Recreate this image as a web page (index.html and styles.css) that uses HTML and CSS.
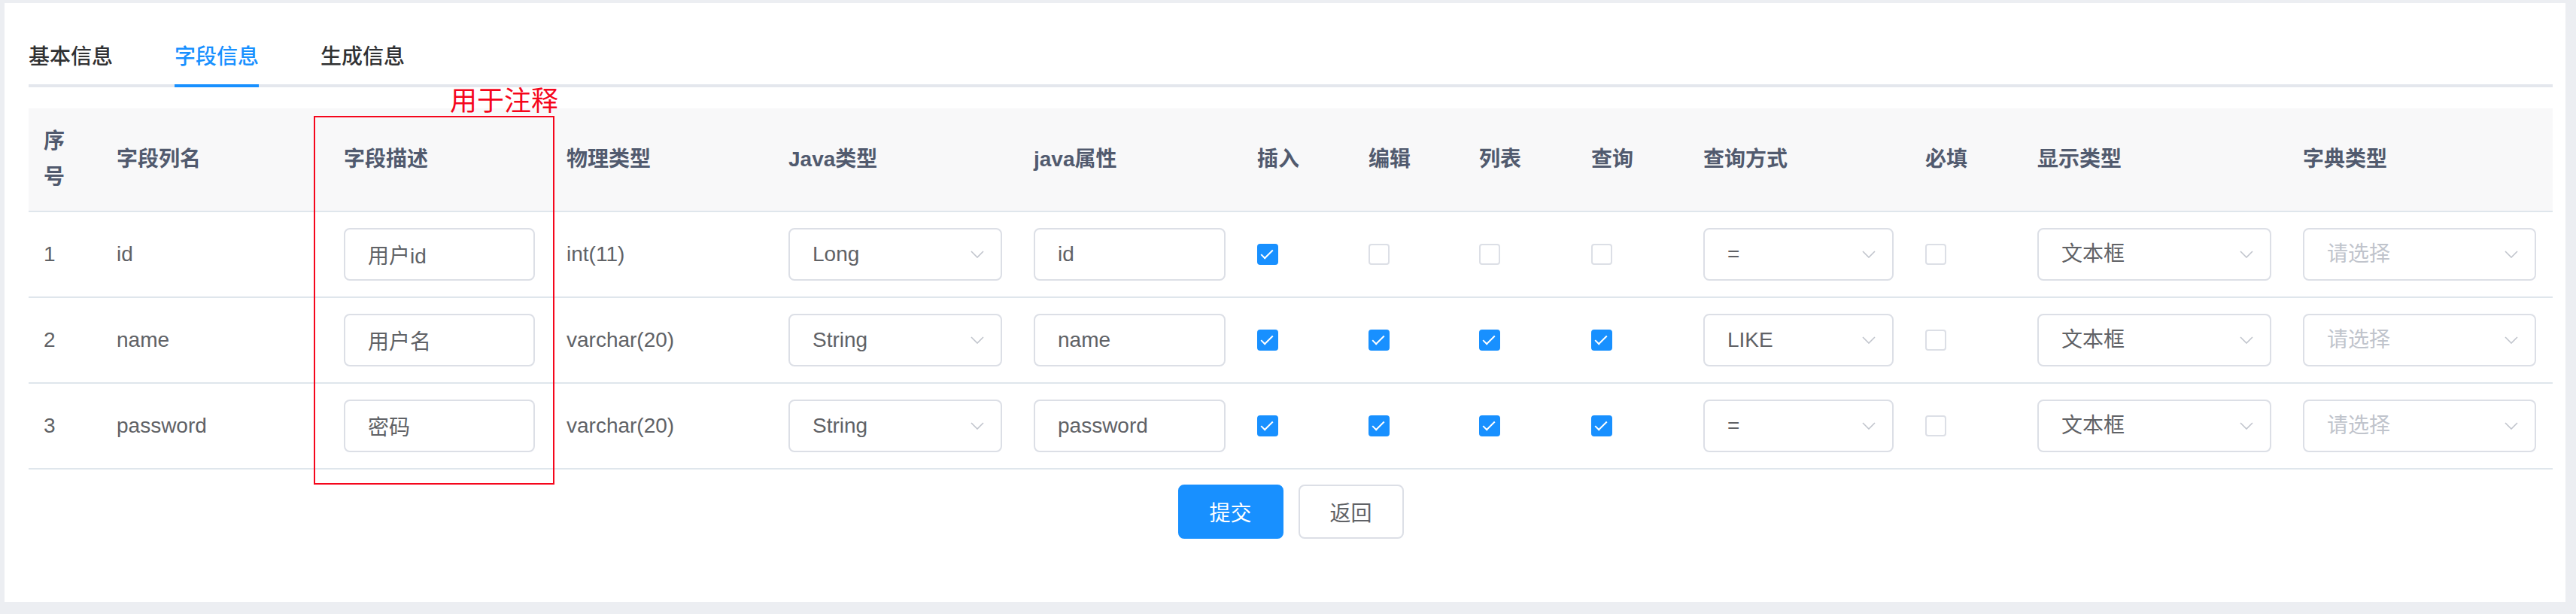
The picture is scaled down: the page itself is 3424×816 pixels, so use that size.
FILE: index.html
```html
<!DOCTYPE html>
<html lang="zh-CN">
<head>
<meta charset="utf-8">
<title>修改生成配置</title>
<link rel="stylesheet" href="styles.css">
</head>
<body>
<div class="card">
  <div class="tabs-nav">
    <div class="tab"><span class="tab-label">基本信息</span></div>
    <div class="tab active"><span class="tab-label">字段信息</span></div>
    <div class="tab"><span class="tab-label">生成信息</span></div>
  </div>

  <table class="gen-table">
    <colgroup>
      <col class="w-idx"><col class="w-10a"><col class="w-10b"><col class="w-10c"><col class="w-11">
      <col class="w-10d"><col class="w-5a"><col class="w-5b"><col class="w-5c"><col class="w-5c">
      <col class="w-10c"><col class="w-5c"><col class="w-12a"><col class="w-12b">
    </colgroup>
    <thead>
      <tr>
        <th>序号</th><th>字段列名</th><th>字段描述</th><th>物理类型</th><th>Java类型</th><th>java属性</th>
        <th>插入</th><th>编辑</th><th>列表</th><th>查询</th><th>查询方式</th><th>必填</th><th>显示类型</th><th>字典类型</th>
      </tr>
    </thead>
    <tbody>
      <tr>
        <td>1</td><td>id</td>
        <td><input class="inp" type="text" value="用户id"></td>
        <td>int(11)</td>
        <td><div class="sel"><span>Long</span><svg class="arrow" width="18" height="10" viewBox="0 0 18 10"><polyline points="1,1 9,9 17,1"/></svg></div></td>
        <td><input class="inp" type="text" value="id"></td>
        <td><span class="cb on"></span></td>
        <td><span class="cb"></span></td>
        <td><span class="cb"></span></td>
        <td><span class="cb"></span></td>
        <td><div class="sel"><span>=</span><svg class="arrow" width="18" height="10" viewBox="0 0 18 10"><polyline points="1,1 9,9 17,1"/></svg></div></td>
        <td><span class="cb"></span></td>
        <td><div class="sel"><span>文本框</span><svg class="arrow" width="18" height="10" viewBox="0 0 18 10"><polyline points="1,1 9,9 17,1"/></svg></div></td>
        <td><div class="sel"><span class="ph">请选择</span><svg class="arrow" width="18" height="10" viewBox="0 0 18 10"><polyline points="1,1 9,9 17,1"/></svg></div></td>
      </tr>
      <tr>
        <td>2</td><td>name</td>
        <td><input class="inp" type="text" value="用户名"></td>
        <td>varchar(20)</td>
        <td><div class="sel"><span>String</span><svg class="arrow" width="18" height="10" viewBox="0 0 18 10"><polyline points="1,1 9,9 17,1"/></svg></div></td>
        <td><input class="inp" type="text" value="name"></td>
        <td><span class="cb on"></span></td>
        <td><span class="cb on"></span></td>
        <td><span class="cb on"></span></td>
        <td><span class="cb on"></span></td>
        <td><div class="sel"><span>LIKE</span><svg class="arrow" width="18" height="10" viewBox="0 0 18 10"><polyline points="1,1 9,9 17,1"/></svg></div></td>
        <td><span class="cb"></span></td>
        <td><div class="sel"><span>文本框</span><svg class="arrow" width="18" height="10" viewBox="0 0 18 10"><polyline points="1,1 9,9 17,1"/></svg></div></td>
        <td><div class="sel"><span class="ph">请选择</span><svg class="arrow" width="18" height="10" viewBox="0 0 18 10"><polyline points="1,1 9,9 17,1"/></svg></div></td>
      </tr>
      <tr>
        <td>3</td><td>password</td>
        <td><input class="inp" type="text" value="密码"></td>
        <td>varchar(20)</td>
        <td><div class="sel"><span>String</span><svg class="arrow" width="18" height="10" viewBox="0 0 18 10"><polyline points="1,1 9,9 17,1"/></svg></div></td>
        <td><input class="inp" type="text" value="password"></td>
        <td><span class="cb on"></span></td>
        <td><span class="cb on"></span></td>
        <td><span class="cb on"></span></td>
        <td><span class="cb on"></span></td>
        <td><div class="sel"><span>=</span><svg class="arrow" width="18" height="10" viewBox="0 0 18 10"><polyline points="1,1 9,9 17,1"/></svg></div></td>
        <td><span class="cb"></span></td>
        <td><div class="sel"><span>文本框</span><svg class="arrow" width="18" height="10" viewBox="0 0 18 10"><polyline points="1,1 9,9 17,1"/></svg></div></td>
        <td><div class="sel"><span class="ph">请选择</span><svg class="arrow" width="18" height="10" viewBox="0 0 18 10"><polyline points="1,1 9,9 17,1"/></svg></div></td>
      </tr>
    </tbody>
  </table>

  <div class="actions">
    <button class="btn btn-primary" type="button">提交</button>
    <button class="btn" type="button">返回</button>
  </div>

  <div class="note">用于注释</div>
  <div class="mark-box"></div>
</div>
</body>
</html>
```

FILE: styles.css
```css
html, body {
  margin: 0;
  padding: 0;
}

body {
  width: 3424px;
  height: 816px;
  overflow: hidden;
  background: #eceef2;
  font-family: "Liberation Sans", "Noto Sans CJK SC", sans-serif;
}

.card {
  position: relative;
  box-sizing: border-box;
  height: 796px;
  margin: 4px 14px 0 6px;
  padding: 32px 17px 0 32px;
  background: #ffffff;
}

/* tabs */
.tabs-nav {
  display: flex;
  height: 80px;
  margin-bottom: 28px;
  box-shadow: inset 0 -4px 0 #e4e7ed;
}

.tab {
  padding: 0 41px;
  font-size: 28px;
  line-height: 80px;
  color: #303133;
  font-weight: 500;
}

.tab:first-child {
  padding-left: 0;
}

.tab-label {
  display: block;
  height: 80px;
}

.tab.active .tab-label {
  color: #1890ff;
  box-shadow: inset 0 -4px 0 #1890ff;
}

/* table */
.gen-table {
  width: 3355px;
  table-layout: fixed;
  border-collapse: separate;
  border-spacing: 0;
  font-size: 28px;
  color: #606266;
}

.w-idx { width: 97px; }
.w-10a { width: 302px; }
.w-10b { width: 296px; }
.w-10c { width: 295px; }
.w-11 { width: 326px; }
.w-10d { width: 297px; }
.w-5a { width: 148px; }
.w-5b { width: 147px; }
.w-5c { width: 149px; }
.w-12a { width: 353px; }
.w-12b { width: 352px; }

.gen-table th {
  background: #f8f8f9;
  color: #515a6e;
  font-weight: bold;
  text-align: left;
  line-height: 48px;
  padding: 20px 22px 20px 20px;
  border-bottom: 2px solid #dfe6ec;
  vertical-align: middle;
}

.gen-table td {
  padding: 21px 22px 21px 20px;
  line-height: 46px;
  border-bottom: 2px solid #dfe6ec;
  vertical-align: middle;
  white-space: nowrap;
}

.inp {
  display: block;
  box-sizing: border-box;
  width: 100%;
  height: 70px;
  margin: 0;
  padding: 0 30px;
  border: 2px solid #dcdfe6;
  border-radius: 8px;
  background: #ffffff;
  font-family: inherit;
  font-size: 28px;
  color: #606266;
  outline: none;
}

.sel {
  display: flex;
  align-items: center;
  justify-content: space-between;
  box-sizing: border-box;
  width: 100%;
  height: 70px;
  padding: 0 22px 0 30px;
  border: 2px solid #dcdfe6;
  border-radius: 8px;
  background: #ffffff;
  color: #606266;
}

.sel .ph {
  color: #c0c4cc;
}

.arrow {
  flex: none;
  fill: none;
  stroke: #c0c4cc;
  stroke-width: 1.6;
}

.cb {
  position: relative;
  display: block;
  box-sizing: border-box;
  width: 28px;
  height: 28px;
  border: 2px solid #dcdfe6;
  border-radius: 4px;
  background: #ffffff;
}

.cb.on {
  background: #1890ff;
  border-color: #1890ff;
}

.cb.on::after {
  content: "";
  position: absolute;
  left: 7px;
  top: 2px;
  width: 6px;
  height: 14px;
  border: solid #ffffff;
  border-width: 0 2px 2px 0;
  transform: rotate(45deg);
}

/* footer buttons */
.actions {
  display: flex;
  justify-content: center;
  gap: 20px;
  margin-top: 20px;
}

.btn {
  box-sizing: border-box;
  width: 140px;
  height: 72px;
  margin: 0;
  padding: 0;
  border: 2px solid #dcdfe6;
  border-radius: 8px;
  background: #ffffff;
  color: #606266;
  font-family: inherit;
  font-size: 28px;
}

.btn-primary {
  background: #1890ff;
  border-color: #1890ff;
  color: #ffffff;
}

/* red annotation overlay */
.note {
  position: absolute;
  left: 592px;
  top: 109px;
  font-size: 36px;
  line-height: 36px;
  color: #f5061c;
  font-family: "Noto Sans CJK SC", sans-serif;
}

.mark-box {
  position: absolute;
  left: 411px;
  top: 150px;
  box-sizing: border-box;
  width: 320px;
  height: 490px;
  border: 2px solid #f5061c;
}
```
